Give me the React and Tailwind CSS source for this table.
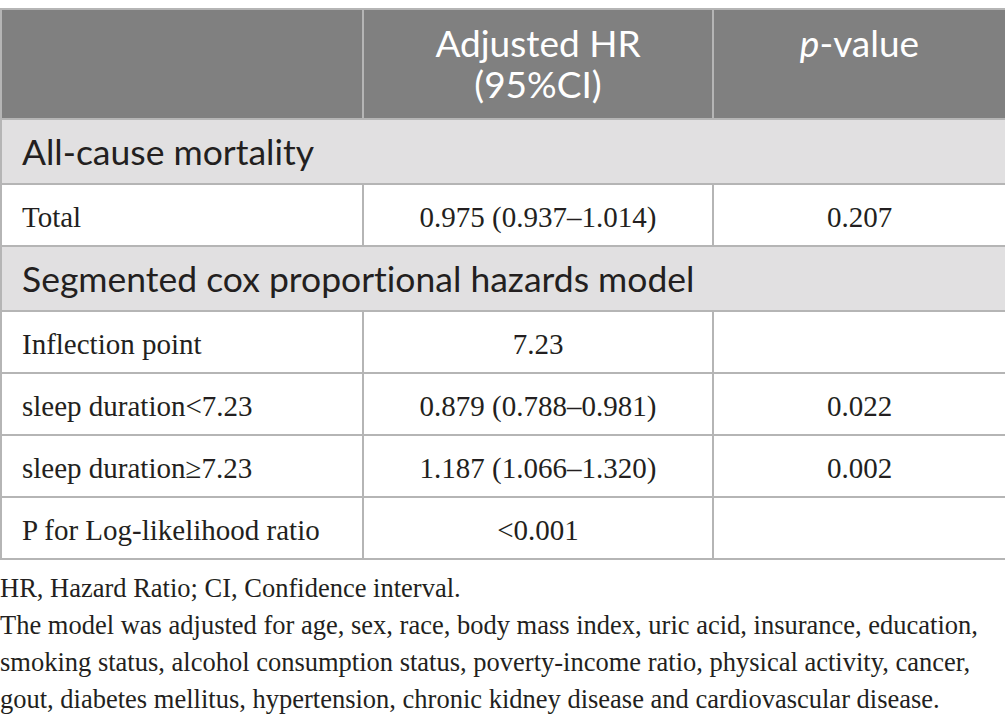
import React from 'react'

const rows = [
  { type: 'section', label: 'All-cause mortality' },
  { label: 'Total', hr: '0.975 (0.937–1.014)', p: '0.207' },
  { type: 'section', label: 'Segmented cox proportional hazards model' },
  { label: 'Inflection point', hr: '7.23', p: '' },
  { label: 'sleep duration<7.23', hr: '0.879 (0.788–0.981)', p: '0.022' },
  { label: 'sleep duration≥7.23', hr: '1.187 (1.066–1.320)', p: '0.002' },
  { label: 'P for Log-likelihood ratio', hr: '<0.001', p: '' },
]

const sans = "font-['Lato','Open_Sans',sans-serif] [font-variant-ligatures:none]"
const serif = "font-['Liberation_Serif','Times_New_Roman',serif]"

export default function App() {
  return (
    <div className="w-[1005px] bg-white pt-2 text-[#231f20]">
      <table className="w-[1005px] table-fixed border-collapse">
        <colgroup>
          <col className="w-[362px]" />
          <col className="w-[350px]" />
          <col className="w-[293px]" />
        </colgroup>
        <thead>
          <tr className="h-[110px] bg-[#808080] text-white">
            <th className="border-2 border-[#b5b5b5] align-top" />
            <th className={`border-2 border-[#b5b5b5] pt-[12px] align-top text-center text-[37px] font-normal leading-[41px] ${sans}`}>
              Adjusted HR<br />(95%CI)
            </th>
            <th className={`border-2 border-[#b5b5b5] pt-[12px] align-top text-center text-[37px] font-normal leading-[41px] ${sans}`}>
              <i>p</i>-value
            </th>
          </tr>
        </thead>
        <tbody>
          {rows.map((r, i) =>
            r.type === 'section' ? (
              <tr key={i} className="h-[65px] bg-[#e1e0e1]">
                <td colSpan={3} className={`border-2 border-[#b5b5b5] pl-[20px] text-left text-[35.5px] leading-none ${sans}`}>
                  {r.label}
                </td>
              </tr>
            ) : (
              <tr key={i} className={`h-[62px] text-[29px] ${serif}`}>
                <td className="border-2 border-[#b5b5b5] pl-[20px] pt-[4px] text-left leading-none">{r.label}</td>
                <td className="border-2 border-[#b5b5b5] pt-[4px] text-center leading-none">{r.hr}</td>
                <td className="border-2 border-[#b5b5b5] pt-[4px] text-center leading-none">{r.p}</td>
              </tr>
            )
          )}
        </tbody>
      </table>

      {/* footnote */}
      <p className={`mt-[10px] text-[26.5px] leading-[37px] ${serif}`}>
        HR, Hazard Ratio; CI, Confidence interval.<br />
        The model was adjusted for age, sex, race, body mass index, uric acid, insurance, education,<br />
        smoking status, alcohol consumption status, poverty-income ratio, physical activity, cancer,<br />
        gout, diabetes mellitus, hypertension, chronic kidney disease and cardiovascular disease.
      </p>
    </div>
  )
}
